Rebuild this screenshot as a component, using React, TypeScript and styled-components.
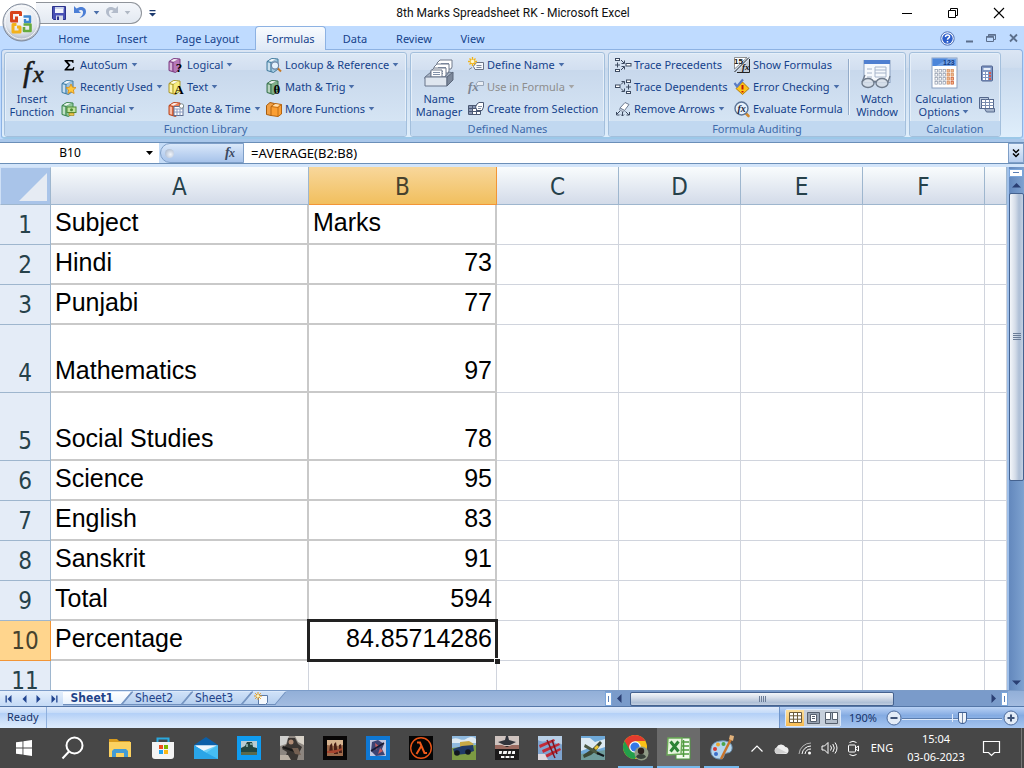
import React from "react";
import styled, { createGlobalStyle, css } from "styled-components";

const UI = `"Noto Sans", "Open Sans", sans-serif`;
const HEAD = `"DejaVu Sans Condensed", "DejaVu Sans", sans-serif`;
const CELL = `"Liberation Sans", Arial, sans-serif`;

const Global = createGlobalStyle`
  *, *::before, *::after { box-sizing: border-box; }
  body { margin: 0; overflow: hidden; }
  button, input { font: inherit; color: inherit; border: 0; padding: 0; margin: 0; background: none; }
  svg { display: block; flex: none; overflow: visible; }
`;

const Page = styled.div`
  display: flex;
  flex-direction: column;
  height: 100vh;
  font: 11px/14px ${UI};
  color: #15428b;
  background: #bfdbff;
`;

/* ---------- title bar ---------- */
const TitleBar = styled.header`
  position: relative;
  display: flex;
  align-items: center;
  height: 26px;
  flex: none;
  background: #fff;
  color: #111;
`;
const Title = styled.h1`
  flex: 1;
  margin: 0;
  padding-right: 20px;
  text-align: center;
  font: 12px/14px Roboto, ${UI};
`;
const QuickAccess = styled.div`
  display: flex;
  align-items: center;
  height: 22px;
  width: 106px;
  margin-left: 36px;
  padding-left: 15px;
  gap: 3px;
  border: 1px solid #8f949b;
  border-left: 0;
  border-radius: 0 11px 11px 0;
  background: linear-gradient(#f4f7fb, #e3e9f1);
`;
const IconButton = styled.button<{ $w?: number }>`
  display: flex;
  align-items: center;
  justify-content: center;
  width: ${(p) => p.$w ?? 16}px;
  height: 16px;
  flex: none;
`;
const WindowButtons = styled.div`
  display: flex;
  width: 140px;
`;
const OfficeButton = styled.button`
  position: absolute;
  z-index: 2;
  left: 2px;
  top: 3px;
  width: 39px;
  height: 39px;
`;

/* ---------- ribbon ---------- */
const TabBar = styled.nav`
  display: flex;
  height: 24px;
  flex: none;
  padding-left: 44px;
`;
const Tab = styled.button<{ $w: number; $on?: boolean }>`
  width: ${(p) => p.$w}px;
  height: 24px;
  && { padding-top: 2px; }
  ${(p) =>
    p.$on &&
    css`
      && {
        position: relative;
        border: 1px solid #8db2e3;
        border-bottom: 0;
        border-radius: 4px 4px 0 0;
        background: linear-gradient(#f8fbfe, #dfe9f6);
        padding-top: 0;
        z-index: 1;
      }
    `}
`;
const TabTools = styled.div`
  display: flex;
  align-items: center;
  gap: 6px;
  margin-left: auto;
  padding-right: 3px;
`;
const Ribbon = styled.section`
  display: flex;
  gap: 3px;
  height: 90px;
  flex: none;
  margin: -1px 1px 0;
  padding: 2px 2px 1px;
  border: 1px solid #8db2e3;
  border-bottom: 2px solid #9cc8e8;
  border-radius: 4px;
  background: linear-gradient(#dbe6f4, #cfddee 20%, #c8d9ed 21%, #dfeefb);
`;
const Group = styled.div<{ $w: number }>`
  display: flex;
  flex-direction: column;
  width: ${(p) => p.$w}px;
  height: 85px;
  border: 1px solid #a3bfdc;
  border-radius: 3px;
  box-shadow: inset 0 0 0 1px #e6eff9;
  overflow: hidden;
  background: linear-gradient(#dde8f5, #d2dff0 20%, #c8d8ec 21%, #d9e8f6);
`;
const GroupBody = styled.div<{ $pad?: number }>`
  display: flex;
  flex: 1;
  min-height: 0;
  padding: 1px 0 0 ${(p) => p.$pad ?? 4}px;
`;
const GroupLabel = styled.div`
  height: 15px;
  line-height: 15px;
  text-align: center;
  color: #3e6aaa;
  background: #c1d8f0;
`;
const BigButton = styled.button<{ $w?: number }>`
  && { margin-right: 5px; padding-top: 4px; }
  display: flex;
  flex-direction: column;
  align-items: center;
  width: ${(p) => p.$w ?? 48}px;
  line-height: 13px;
  white-space: nowrap;
  flex: none;
  svg.big { margin-bottom: 2px; }
`;
const BigLine = styled.span`
  display: flex;
  align-items: center;
  gap: 3px;
`;
const CommandColumn = styled.div<{ $w: number }>`
  display: flex;
  flex-direction: column;
  width: ${(p) => p.$w}px;
  flex: none;
`;
const Command = styled.button<{ $off?: boolean }>`
  && { color: ${(p) => (p.$off ? "#8d8d8d" : "inherit")}; }
  display: flex;
  align-items: center;
  gap: 3px;
  height: 22px;
  white-space: nowrap;
`;
const Divider = styled.div`
  width: 2px;
  height: 56px;
  flex: none;
  margin: 5px 3px 0;
  background: linear-gradient(90deg, #93abc9 50%, #eef4fb 50%);
`;
const SmallStack = styled.div`
  display: flex;
  flex-direction: column;
  gap: 14px;
  padding-top: 12px;
`;

/* ---------- formula bar ---------- */
const FormulaBar = styled.section`
  display: flex;
  height: 28px;
  flex: none;
  align-items: stretch;
  border-top: 3px solid #a9c7ea;
  border-bottom: 3px solid #d3e5fa;
  box-shadow: inset 0 1px 0 #6b8fb8, inset 0 -1px 0 #6b8fb8;
  background: #c5dcf7;
  color: #000;
`;
const NameBox = styled.label`
  display: flex;
  align-items: center;
  width: 159px;
  margin: 1px 0;
  background: #fff;
  input { width: 140px; margin-right: 6px; text-align: center; font-size: 12px; }
`;
const FxArea = styled.div`
  display: flex;
  align-items: center;
  justify-content: space-between;
  width: 84px;
  margin: 1px 0 1px 1px;
  padding: 0 5px 0 4px;
  border: 1px solid #7f9fc8;
  border-radius: 11px 0 0 11px;
  background: linear-gradient(#dbe9fa, #c0d5f2 50%, #a7c3ea);
`;
const Dimple = styled.span`
  width: 9px;
  height: 9px;
  border-radius: 50%;
  background: radial-gradient(circle at 60% 60%, #f2f5fa, #9bacc5);
`;
const FormulaInput = styled.input`
  flex: 1;
  min-width: 0;
  && { margin: 1px 0; padding-left: 7px; background: #fff; font-size: 13px; }
`;
const ExpandButton = styled.button`
  width: 16px;
  display: flex;
  align-items: center;
  justify-content: center;
  && { margin: 1px 0; border: 1px solid #7f9fc8; background: linear-gradient(#e6f0fc, #b6cdee); }
`;

/* ---------- sheet ---------- */
const SheetArea = styled.main`
  display: flex;
  flex: 1;
  min-height: 0;
`;
const GridClip = styled.div`
  flex: 1;
  min-width: 0;
  overflow: hidden;
  background: #fff;
`;
const Grid = styled.table`
  width: 100%;
  table-layout: fixed;
  border-collapse: separate;
  border-spacing: 0;
  color: #000;
`;
const ColHead = styled.th<{ $w?: number; $on?: boolean }>`
  ${(p) => p.$w && `width: ${p.$w}px;`}
  height: 38px;
  padding: 3px 0 0;
  font: 24px/32px ${HEAD};
  color: #26414a;
  border-right: 1px solid #9eb6ce;
  border-bottom: 1px solid #9eb6ce;
  background: linear-gradient(#f9fcfd, #d3dbe9);
  ${(p) =>
    p.$on &&
    css`
      color: #47422e;
      border-color: #f29536;
      background: linear-gradient(#f8d79b, #f1bf5e);
    `}
`;
const Corner = styled.th`
  width: 51px;
  height: 38px;
  padding: 4px 4px 3px 18px;
  border: 1px solid #cfe0f6;
  border-right-color: #9eb6ce;
  border-bottom-color: #9eb6ce;
  background: #a9c4e9;
`;
const RowHead = styled.th<{ $h: number; $on?: boolean }>`
  height: ${(p) => p.$h}px;
  padding: 0 0 4px;
  vertical-align: bottom;
  text-align: center;
  font: 24px/30px ${HEAD};
  color: #26414a;
  border-right: 1px solid #9eb6ce;
  border-bottom: 1px solid #9eb6ce;
  background: ${(p) => (p.$on ? "#ffd58d" : "#e4ecf7")};
  ${(p) => p.$on && "border-color: #f29536; color: #47422e;"}
`;
const Cell = styled.td<{ $boxed?: boolean; $num?: boolean }>`
  position: relative;
  padding: 0 3px 6px 4px;
  vertical-align: bottom;
  white-space: nowrap;
  font: 25px/29px ${CELL};
  text-align: ${(p) => (p.$num ? "right" : "left")};
  border-right: 1px solid #d0d4dd;
  border-bottom: 1px solid #d0d4dd;
  ${(p) => p.$boxed && "border-width: 0 2px 2px 0; border-color: #c9c9c9;"}
`;
const Selection = styled.span`
  position: absolute;
  z-index: 1;
  inset: -2px -3px -3px -2px;
  border: 3px solid #222;
  &::after {
    content: "";
    position: absolute;
    right: -5px;
    bottom: -5px;
    width: 6px;
    height: 6px;
    background: #222;
    border: 1px solid #fff;
    border-width: 1px 0 0 1px;
  }
`;
const VScroll = styled.div`
  display: flex;
  flex-direction: column;
  align-items: stretch;
  width: 17px;
  flex: none;
  border-left: 2px solid #9fc0ea;
  background: linear-gradient(90deg, #6388bd, #7ea2d0);
`;
const SplitV = styled.div`
  height: 8px;
  margin: 2px 1px 1px 0;
  padding: 2px 3px;
  border: 1px solid #7aa5da;
  background: #fff;
  &::after { content: ""; display: block; height: 1px; background: #5a7fb5; }
`;
const ArrowButton = styled.button`
  display: flex;
  align-items: center;
  justify-content: center;
  width: 15px;
  height: 15px;
  flex: none;
`;
const ThumbV = styled.div`
  display: flex;
  flex-direction: column;
  align-items: center;
  justify-content: center;
  gap: 1px;
  height: 55%;
  border: 1px solid #45628f;
  border-radius: 2px;
  background: linear-gradient(90deg, #f3f6fa, #d5dde9 40%, #aebfd6 70%, #c3d0e2);
  i { width: 8px; height: 1px; background: #6b7d98; }
`;
const Spring = styled.div`
  flex: 1;
`;

/* ---------- sheet tabs ---------- */
const SheetBar = styled.div`
  display: flex;
  align-items: center;
  height: 17px;
  flex: none;
  border-top: 1px solid #7c9cc8;
  border-bottom: 1px solid #5577a8;
  background: linear-gradient(#92afd8, #a3bce0);
`;
const SheetNav = styled.div`
  display: flex;
  align-items: center;
  width: 63px;
  height: 15px;
  padding-left: 1px;
  background: linear-gradient(#e4effc, #c4daf6);
`;
const SheetTab = styled.button<{ $w: number; $on?: boolean }>`
  position: relative;
  width: ${(p) => p.$w}px;
  height: 15px;
  z-index: ${(p) => (p.$on ? 1 : 0)};
  && {
    font: ${(p) => (p.$on ? "bold" : "normal")} 12px/15px ${HEAD};
    color: #1f4389;
    padding-right: 6px;
  }
  display: flex;
  align-items: center;
  justify-content: center;
  &::before {
    content: "";
    position: absolute;
    z-index: -1;
    inset: 0 0 1px ${(p) => (p.$on ? -6 : 0)}px;
    transform: skewX(-40deg);
    border: 1px solid #6f8fbd;
    border-top-color: #dbe9fb;
    background: ${(p) => (p.$on ? "linear-gradient(#fff, #e8f2fd)" : "linear-gradient(#cfe1f8, #b6cfef)")};
  }
`;
const SheetTabs = styled.div`
  display: flex;
  isolation: isolate;
  overflow: hidden;
  padding-right: 10px;
`;
const HScroll = styled.div`
  display: flex;
  align-items: center;
  width: 403px;
  margin-left: auto;
  margin-right: 16px;
  height: 15px;
  background: #7a9bca;
`;
const SplitH = styled.div`
  width: 7px;
  height: 14px;
  padding: 3px 2px;
  border: 1px solid #7aa5da;
  background: #fff;
  &::after { content: ""; display: block; width: 1px; height: 6px; background: #5a7fb5; }
`;
const ThumbH = styled.div`
  display: flex;
  align-items: center;
  justify-content: center;
  gap: 1px;
  width: 264px;
  height: 14px;
  margin-left: 3px;
  border: 1px solid #45628f;
  border-radius: 2px;
  background: linear-gradient(#f3f6fa, #d5dde9 40%, #aebfd6 80%, #c3d0e2);
  i { width: 1px; height: 6px; background: #6b7d98; }
`;

/* ---------- status bar ---------- */
const StatusBar = styled.footer`
  display: flex;
  height: 21px;
  flex: none;
  background: linear-gradient(#dfeafb, #c3daf8 30%, #b3d0f7 31%, #cfe1f9 70%, #dcebfc);
`;
const StatusText = styled.div`
  width: 47px;
  padding-left: 7px;
  line-height: 20px;
  color: #15336b;
  border-right: 1px solid #8fb0dd;
`;
const StatusRight = styled.div`
  display: flex;
  align-items: center;
  width: 245px;
  margin-left: auto;
  padding-left: 5px;
  border-left: 1px solid #6f95ca;
  background: linear-gradient(#b9d2f5, #8cb0e4 35%, #84abe2 40%, #a6c5f0);
`;
const ViewButtons = styled.div`
  display: flex;
  height: 18px;
  border: 1px solid #dbe8f9;
  border-radius: 2px;
`;
const ViewButton = styled.button<{ $on?: boolean }>`
  display: flex;
  align-items: center;
  justify-content: center;
  width: 18px;
  height: 16px;
  && { background: ${(p) => (p.$on ? "linear-gradient(#fcdf9c, #f8bc52)" : "#c6cfdb")}; }
`;
const ZoomLabel = styled.button`
  width: 44px;
  && { color: #15336b; }
`;
const ZoomSlider = styled.input`
  appearance: none;
  width: 100px;
  height: 16px;
  && {
    background: linear-gradient(#dfeafa, #dfeafa) 50px 50% / 1px 8px no-repeat,
      linear-gradient(#dfeafa, #dfeafa) 0 9px / 100% 1px no-repeat,
      linear-gradient(#5b7dae, #5b7dae) 0 8px / 100% 1px no-repeat;
  }
  &::-webkit-slider-thumb {
    appearance: none;
    width: 9px;
    height: 12px;
    border: 1px solid #3f5f92;
    background: linear-gradient(90deg, #eef3fa 44%, #6f86a8 45%, #6f86a8 56%, #eef3fa 57%);
    border-radius: 1px 1px 5px 5px;
  }
`;

/* ---------- taskbar ---------- */
const Taskbar = styled.nav`
  display: flex;
  height: 40px;
  flex: none;
  color: #fff;
  background: #474747;
`;
const Task = styled.button<{ $w?: number; $open?: boolean; $on?: boolean }>`
  display: flex;
  align-items: center;
  justify-content: center;
  width: ${(p) => p.$w ?? 43}px;
  height: 40px;
  && {
    ${(p) => p.$on && "background: #6b6b6b;"}
    ${(p) => (p.$open || p.$on) && "background-image: linear-gradient(#76b9ed, #76b9ed); background-size: calc(100% - 8px) 2px; background-position: 50% 100%; background-repeat: no-repeat;"}
    ${(p) => p.$on && "background-size: 100% 2px;"}
  }
`;
const Tray = styled.div`
  display: flex;
  align-items: center;
  margin-left: auto;
`;
const TrayItem = styled.button<{ $w: number }>`
  display: flex;
  flex-direction: column;
  align-items: center;
  justify-content: center;
  width: ${(p) => p.$w}px;
  height: 40px;
  line-height: 18px;
`;
const ShowDesktop = styled.button`
  width: 13px;
  height: 40px;
  && { border-right: 1px solid #777; margin-right: 2px; }
`;

/* ---------- icons ---------- */
const Caret = ({ c = "#4a6ea9" }: { c?: string }) => (
  <svg width="7" height="4" viewBox="0 0 7 4"><path d="M.7 0h5.600L3.500 3.400z" fill={c} /></svg>
);

const Book = ({ c, d, children }: { c: string; d: string; children?: React.ReactNode }) => (
  <svg width="16" height="16" viewBox="0 0 16 16">
    <path d="M1 4.500 5.500 1.500 12 2v10l-4.500 3.500L1 13.500z" fill={c} stroke={d} />
    <path d="M1 4.500 5 5.500v9.500M5 5.500 9.500 2" fill="none" stroke={d} />
    <path d="M1.800 5.500l2.200.6v7.500l-2.200-.7z" fill="#fff" opacity=".45" />
    <path d="M2.500 4 6 2l4 .300L6 4.700z" fill="#fff" opacity=".85" />
    {children}
  </svg>
);
const bookText = (t: string) => (
  <text x="11" y="14.500" textAnchor="middle" fontFamily="Liberation Serif, serif" fontWeight="700" fontSize="13" fill="#000">{t}</text>
);

const Sigma = () => (
  <svg width="16" height="16" viewBox="0 0 16 16"><path d="M3.500 3h9v3h-1c-.2-1.200-.8-1.600-2-1.600H6.500L9.600 8l-3.400 3.800h4c1.200 0 1.900-.5 2.200-1.800h1L12.700 13.500h-9.200v-.9L7.300 8.300 3.500 3.900z" fill="#000" /></svg>
);
const Recent = () => (
  <Book c="#9cc3e0" d="#3f7da5"><path d="m10 5 1.500 3.200 3.500.4-2.600 2.400.7 3.500-3.100-1.700-3.100 1.700.7-3.500L5 8.600l3.500-.4z" fill="#ffc83d" stroke="#d98b11" strokeWidth=".8" /></Book>
);
const Financial = () => (
  <Book c="#8fc79a" d="#3b8350"><rect x="6" y="6" width="9" height="5.500" fill="#bfe3a0" stroke="#4c8a35" /><circle cx="10.500" cy="8.700" r="1.500" fill="#4c8a35" /><path d="M8 12h5v2.500H8z" fill="#e9c84f" stroke="#9a7a16" strokeWidth=".6" /></Book>
);
const DateTime = () => (
  <Book c="#f0825a" d="#b9461f"><rect x="6" y="5.500" width="9" height="9" fill="#fff" stroke="#5f6f92" /><path d="M6 8h9M9 8v6.500M12 8v6.500M6 11h9" stroke="#8a9bc0" /><circle cx="13.500" cy="5" r="2.200" fill="#fff" stroke="#566" strokeWidth=".7" /></Book>
);
const Lookup = () => (
  <Book c="#9fc7e0" d="#427a9c"><path d="m11.500 11 3.500 3.500" stroke="#c77a28" strokeWidth="2" /><circle cx="9" cy="8.500" r="3.600" fill="#e4f2fd" stroke="#6f87a6" strokeWidth="1.200" /></Book>
);
const More = () => (
  <svg width="16" height="16" viewBox="0 0 16 16"><path d="M.5 4.500 4 1.500l4.500 1v9L5 14.500l-4.500-1z" fill="#f2a044" stroke="#a85c0c" /><path d="M5 5.500 9 2.500l6.500 1v9.500L12 15.500l-7-1z" fill="#fb9f33" stroke="#b5640f" /><path d="M5 5.500 12 6.500v9M12 6.500l3.500-3" fill="none" stroke="#b5640f" strokeWidth=".8" /><path d="M6.500 5 9.500 3l4 .7L11.500 5.700z" fill="#ffe0b0" /></svg>
);
const FxBig = () => (
  <svg className="big" width="32" height="32" viewBox="0 0 32 32" fontFamily="Liberation Serif, serif" fontStyle="italic" fill="#1a1a1a" stroke="#1a1a1a" strokeWidth=".6">
    <text x="7" y="24" fontSize="30">f</text>
    <text x="17" y="24" fontSize="24">x</text>
  </svg>
);
const FxSmall = () => (
  <svg width="16" height="16" viewBox="0 0 16 16" fontFamily="Liberation Serif, serif" fontStyle="italic" fontWeight="700" fill="#3b4860">
    <text x="3" y="12" fontSize="14">f</text>
    <text x="7" y="12" fontSize="12">x</text>
  </svg>
);
const NameManagerIcon = () => (
  <svg className="big" width="32" height="32" viewBox="0 0 32 32">
    {[[14, 2], [11, 6], [8, 10]].map(([x, y]) => (
      <g key={x}><path d={`M${x} ${y + 3}l3-3h12v7l-1 2H${x}z`} fill="#fff" stroke="#707b8c" /><path d={`M${x + 4} ${y + 3.5}h8M${x + 4} ${y + 5.5}h8`} stroke="#8190a8" /></g>
    ))}
    <path d="M2 19l6-5v5h14l4-5 4 1-5 6H2z" fill="#a9b4c4" stroke="#68758a" />
    <path d="M8 12h11v7H8z" fill="#fff" stroke="#707b8c" /><path d="M10 14.500h7M10 16.500h7" stroke="#8190a8" />
    <path d="M2 19h22v9H2z" fill="#dfe6ef" stroke="#68758a" />
    <path d="m24 19 6-5v8l-6 6z" fill="#7c889b" stroke="#5b677a" />
  </svg>
);
const DefineName = () => (
  <svg width="16" height="16" viewBox="0 0 16 16"><path d="M7 6.500 9 5.500h6.500v7H7L5.500 9.500z" fill="#f6f8fb" stroke="#6a7486" /><path d="M8.500 8.500h5M8.500 10.500h5M1 12.500l3-2" stroke="#7a879c" /><path d="M4.500 0v9M0 4.500h9M1.500 1.500l6 6M7.500 1.500l-6 6" stroke="#f2b418" strokeWidth="1.300" /><circle cx="4.500" cy="4.500" r="1.800" fill="#fffbd0" /></svg>
);
const UseFormula = () => (
  <svg width="16" height="16" viewBox="0 0 16 16"><text x="0" y="12" fontFamily="Liberation Serif, serif" fontStyle="italic" fontWeight="700" fontSize="13" fill="#7d8694">fx</text><path d="M9 3.500 10.500 2.500h5v4H9l-1-1.500z" fill="#e8edf4" stroke="#97a5b8" /></svg>
);
const CreateSel = () => (
  <svg width="16" height="16" viewBox="0 0 16 16"><path d="M.5 4.500h12v9H.5z" fill="#fff" stroke="#4a5873" /><path d="M1 5h4v8H1zM1 5h11v3H1z" fill="#8a98b5" /><path d="M.5 7.500h12M.5 10.500h12M4.500 4.500v9M8.500 4.500v9" stroke="#4a5873" /><path d="M9 3 11 1.500h4.500V6L14 9.500H9L7.500 6z" fill="#fff" stroke="#4a5873" /><path d="M10 5.500h4M10 7.500h3" stroke="#8190a8" /></svg>
);
const TracePre = () => (
  <svg width="16" height="16" viewBox="0 0 16 16" fill="none" stroke="#3d4a60"><rect x=".5" y="1.500" width="4" height="2" fill="#fff" /><rect x=".5" y="12.500" width="4" height="2" fill="#fff" /><path d="M2.500 5.500v5M0 8h5M6 3l3 3M6 13 9 10M9.500 3.500v3h-3M9.500 12.500v-3h-3" /><rect x="11" y="6.500" width="5" height="2.500" fill="#fff" /></svg>
);
const TraceDep = () => (
  <svg width="16" height="16" viewBox="0 0 16 16" fill="none" stroke="#3d4a60"><rect x=".5" y="6" width="4.500" height="2.500" fill="#fff" /><path d="M6 5.500 9 2.500M6 9.500 9 12.500M6.500 2.500h3v3M6.500 12.500h3v-3M13.500 5.500v5M11 8h5" /><rect x="11.500" y="1" width="4" height="2.500" fill="#fff" /><rect x="11.500" y="12.500" width="4" height="2" fill="#fff" /></svg>
);
const RemoveArrows = () => (
  <svg width="16" height="16" viewBox="0 0 16 16"><path d="m5 7 5-5.500 4 2L9.500 9.500z" fill="#fff" stroke="#6d7a90" /><path d="m5 7 4.500 2.500-1 1.500L4.500 9z" fill="#c5cfdd" stroke="#6d7a90" strokeWidth=".7" /><path d="M5 10 1.500 13.500M1.500 11v3h3M7.500 11v4M6 13.500l1.500 1.500L9 13.500M10.500 10.500l3.500 3.500M14.500 11v3h-3" fill="none" stroke="#3d4a60" /></svg>
);
const ShowFormulas = () => (
  <svg width="16" height="16" viewBox="0 0 16 16">
    <path d="M.5.500H13L.5 12z" fill="#fff" stroke="#777" strokeWidth=".8" />
    <path d="M15 3v12H3z" fill="#c3ccd8" />
    <path d="M15.500 2v13.500H3" stroke="#222" fill="none" />
    <path d="M15 .5.5 15" stroke="#222" />
    <text x="0" y="7" fontFamily="Liberation Sans, sans-serif" fontSize="8" fontWeight="700" fill="#111">15</text>
    <text x="8" y="13" fontFamily="Liberation Serif, serif" fontSize="9" fontStyle="italic" fontWeight="700" fill="#111">fx</text>
  </svg>
);
const ErrorCheck = () => (
  <svg width="16" height="16" viewBox="0 0 16 16"><path d="m8.500 3 6.500 6.500-6.500 6-6.500-6z" fill="#fcc419" stroke="#b97a08" /><path d="M8.500 6v4.500M8.500 12v1.500" stroke="#c21807" strokeWidth="2" /><path d="m.5 4 2.500 3.500L9 .5" fill="none" stroke="#5b7cc4" strokeWidth="2.200" /></svg>
);
const EvalFormula = () => (
  <svg width="16" height="16" viewBox="0 0 16 16"><path d="m11.500 12 3 3" stroke="#d08a32" strokeWidth="2.600" strokeLinecap="round" /><circle cx="7.500" cy="7.500" r="6.500" fill="#e6f1fb" stroke="#5b7396" strokeWidth="1.400" /><text x="3.500" y="11" fontFamily="Liberation Serif, serif" fontStyle="italic" fontWeight="700" fontSize="10" fill="#1a2440">fx</text></svg>
);
const WatchIcon = () => (
  <svg className="big" width="32" height="32" viewBox="0 0 32 32"><rect x="3" y="2.500" width="26" height="22" fill="#f6f9fd" stroke="#8aa0c0" /><path d="M3 2h26v4H3z" fill="#4f7fd0" /><path d="M6 11h5M6 15h5M6 19h5M14 9h11v10H14zM14 12h11M14 15h11" stroke="#a6b4ca" fill="none" /><ellipse cx="7" cy="25" rx="6" ry="4.500" fill="#d6dee8" fillOpacity=".85" stroke="#707c8c" strokeWidth="1.400" /><ellipse cx="21" cy="25" rx="6" ry="4.500" fill="#d6dee8" fillOpacity=".85" stroke="#707c8c" strokeWidth="1.400" /><path d="M13 24c.5-1 1.500-1 2 0M27 24l2-6M1 24l3-7" fill="none" stroke="#707c8c" strokeWidth="1.300" /></svg>
);
const CalcIcon = () => (
  <svg className="big" width="32" height="32" viewBox="0 0 32 32"><rect x="4" y="0" width="25" height="30" fill="#fff" stroke="#8a9fbf" /><path d="M4.500.500h24V8h-24z" fill="#6ea0e6" /><path d="M4.500.500H20L8 8H4.500z" fill="#4c86da" /><text x="15" y="7" fontFamily="Liberation Sans, sans-serif" fontSize="7" fontWeight="700" fill="#123a80">123</text>
    {[0, 1, 2, 3].map((r) => [0, 1, 2, 3, 4].map((c) => <rect key={`${r}${c}`} x={7 + c * 4} y={11.5 + r * 4} width="2.600" height="2.600" fill={c > 2 ? "#f5b98c" : "#fff"} stroke={c === 4 && r > 1 ? "#c9552d" : c > 2 ? "#d08a5a" : "#8995a8"} strokeWidth=".7" />))}
  </svg>
);
const CalcNow = () => (
  <svg width="16" height="18" viewBox="0 0 16 18"><rect x="2.500" y="1" width="11" height="15" rx="1" fill="#7f96c2" stroke="#4f6390" /><path d="M4.500 3h7v2h-7z" fill="#e5edf9" />{[0, 1, 2].map((r) => [0, 1, 2].map((c) => <rect key={`${r}${c}`} x={4 + c * 3} y={7 + r * 3} width="2" height="2" fill={c === 2 ? "#d6574c" : "#fff"} />))}</svg>
);
const CalcSheet = () => (
  <svg width="18" height="17" viewBox="0 0 18 17"><path d="M1.500 1.500h9v11h-9z" fill="#b9c8de" stroke="#55688c" /><rect x="3.500" y="3.500" width="12" height="9" fill="#fff" stroke="#55688c" /><path d="M3.500 6.500h12M3.500 9.500h12M7.500 3.500v9M11.500 3.500v9" stroke="#7a8dae" /><path d="M6.500 12.500h10V16h-8z" fill="#a5b5cd" stroke="#55688c" /></svg>
);

const OfficeLogo = () => (
  <svg width="39" height="39" viewBox="0 0 39 39">
    <defs><radialGradient id="orb" cx=".5" cy=".3" r=".8"><stop offset="0" stopColor="#fff" /><stop offset=".6" stopColor="#dfe4ec" /><stop offset="1" stopColor="#8a95a6" /></radialGradient></defs>
    <circle cx="19.500" cy="19.500" r="18.500" fill="url(#orb)" stroke="#7d8797" />
    <circle cx="19.500" cy="19.500" r="16.500" fill="none" stroke="#fff" opacity=".8" />
    <g fill="none" strokeLinejoin="round">
      <path d="M18.500 13v-3.500h-9v8.500h5M14.500 13.500v6" stroke="#d8441c" strokeWidth="3" />
      <path d="M21.500 13.500h6.500v5.500h-5v-3" stroke="#3d86cf" strokeWidth="2.400" />
      <path d="M14.500 21.500h-3.500v7.500h7v-5h-3" stroke="#f3b21b" strokeWidth="3" />
      <path d="M21.500 21.500h7v6.500h-6.500v-4" stroke="#67ab3c" strokeWidth="2.600" />
    </g>
  </svg>
);
const Save = () => (
  <svg width="16" height="16" viewBox="0 0 16 16"><path d="M1.500 1.500h13v13h-12l-1-1z" fill="#4951b5" stroke="#2c338c" /><path d="M4 2h8.500v6H4z" fill="#f3f5fb" /><path d="M4 2h8.500v2H4z" fill="#c9d2ec" /><path d="M5 10.500h7V15H5z" fill="#d6dbe8" /><path d="M6 11.500h2V15H6z" fill="#2c338c" /></svg>
);
const Undo = ({ c, flip }: { c: string; flip?: boolean }) => (
  <svg width="16" height="16" viewBox="0 0 16 16"><g transform={flip ? "matrix(-1 0 0 1 16 0)" : undefined}><path d="M2 1v7h7L6.500 5.800C9 4 11.500 5 11 8c-.3 2-1.500 3.500-3.500 5C12 12 14 9.500 14 6.500 14 2 8.500.5 4.500 3.600z" fill={c} /></g></svg>
);
const Tri = ({ dir, c = "#2a3f73" }: { dir: "u" | "d" | "l" | "r"; c?: string }) => (
  <svg width="9" height="9" viewBox="0 0 9 9"><path d={{ u: "M0 6.500 4.500 2 9 6.500z", d: "M0 2.500 4.500 7 9 2.500z", l: "M6.500 0 2 4.500 6.500 9z", r: "M2.500 0 7 4.500 2.500 9z" }[dir]} fill={c} /></svg>
);
const NavArrow = ({ left, bar }: { left?: boolean; bar?: boolean }) => (
  <svg width="8" height="8" viewBox="0 0 8 8"><g fill="#20448f" transform={left ? undefined : "matrix(-1 0 0 1 8 0)"}><path d="M6.500 0v8L2.500 4z" />{bar && <path d="M.5.500h1.300v7H.5z" />}</g></svg>
);

const Frame = ({ bg, children }: { bg: string; children: React.ReactNode }) => (
  <svg width="24" height="24" viewBox="0 0 24 24"><rect width="24" height="24" fill={bg} />{children}</svg>
);
const appIcons: Record<string, React.ReactNode> = {
  Start: <svg width="18" height="18" viewBox="0 0 18 18"><path d="M1 3.300 7.500 2.400v6.200H1zM8.400 2.300 17 1v7.600H8.400zM1 9.400h6.500v6.200L1 14.700zM8.400 9.400H17V17l-8.600-1.300z" fill="#fff" /></svg>,
  Search: <svg width="24" height="24" viewBox="0 0 24 24" fill="none" stroke="#fff" strokeWidth="2"><circle cx="13.500" cy="9.500" r="8" /><path d="m8 15.500-6.500 7" /></svg>,
  "File Explorer": <svg width="24" height="24" viewBox="0 0 24 24"><path d="M1 3h8l2 2h11v4H1z" fill="#d89b1d" /><path d="M1 6h22v15H1z" fill="#fbd160" /><path d="M4 21v-6l2-2h12l2 2v6h-4v-4H8v4z" fill="#439bd4" /></svg>,
  Store: <svg width="24" height="24" viewBox="0 0 24 24"><path d="M6.500 7V2.500h11V7" fill="none" stroke="#2aa9df" strokeWidth="2" /><path d="M1 6h22v14a3 3 0 0 1-3 3H4a3 3 0 0 1-3-3z" fill="#f4f4f4" /><path d="M8 9h4v4H8z" fill="#ef4f21" /><path d="M13 9h4v4h-4z" fill="#7eb900" /><path d="M8 14h4v4H8z" fill="#20a3ee" /><path d="M13 14h4v4h-4z" fill="#fdb813" /></svg>,
  Mail: <svg width="24" height="24" viewBox="0 0 24 24"><path d="M0 9 12 1l12 8v5H0z" fill="#0b5fa8" /><path d="M1 9.500h22L14 17H10z" fill="#eef7fd" /><path d="M0 9l12 7L24 9v14H0z" fill="#2aa5e8" /><path d="M1 9.500h22L12.500 16.500z" fill="#eef7fd" /><path d="M24 9v14L9 15z" fill="#4dc4f5" opacity=".8" /></svg>,
  "Train game": <Frame bg="#109cf0"><path d="M4 5h16v14H4z" fill="#b9cdd3" /><path d="M4 12l4-2 2-4h5l1 5 4 1v7H4z" fill="#24463f" /><path d="M4 16h16v3H4z" fill="#5a6a4b" /><path d="M9 8h2v3H9zM13 7h3v2h-3z" fill="#7da09a" /></Frame>,
  "Soldier game": <Frame bg="#8d8680"><path d="M0 0h9L6 8 0 10z" fill="#cfcfcd" /><path d="M15 0h9v9l-6-3z" fill="#d8d2c8" /><path d="M8 2h7l3 6 4 3-3 6-2 7H5l2-8-5-3 5-5z" fill="#3b3633" /><circle cx="11" cy="6" r="2.500" fill="#b08b74" /><path d="m3 10 15 5-1 2L2 12z" fill="#1a1919" /><path d="M12 12h6l3 7-6-1z" fill="#756052" /><path d="M0 19h8l3 5H0z" fill="#b9aea2" /></Frame>,
  "Age game": <Frame bg="#080606"><path d="M4 4h16v16H4z" fill="#9c6a4b" /><path d="M4 4h16v5l-7 1-9-1z" fill="#d7b390" /><path d="m7 9 2-2 1 10H6zM11 8l2-2 2 12h-4zM16 9l2-1 1 9h-3z" fill="#4a1f17" /><path d="M4 15l9-1 6-2v2l-7 3H4z" fill="#a8452f" /></Frame>,
  "Action game": <Frame bg="#0f78d4"><path d="M4 4h16v16H4z" fill="#c2c6de" /><path d="M6 6l6-2 6 4-2 5 3 6-9 1-5-5z" fill="#3d4372" /><path d="M9 7l4 3-3 4zM14 12l3 3-5 3z" fill="#c65b5f" /><path d="m5 15 13-8" stroke="#161a33" strokeWidth="1.500" /></Frame>,
  "Half-Life": <Frame bg="#050505"><circle cx="12" cy="12" r="10.300" fill="none" stroke="#e65317" strokeWidth="1.400" /><path d="M8 6.500h3l4.500 10.500h2.500M12 10.500 7.500 18" fill="none" stroke="#f05a1a" strokeWidth="2" /></Frame>,
  "Buggy game": <Frame bg="#8fb9de"><path d="M0 12l24-3v15H0z" fill="#7c9a43" /><path d="M0 3c6-3 9 3 14 0s8-2 10 0v4H0z" fill="#dfeaf2" /><path d="M8 6l9-1 5 3-4 3-10 1z" fill="#c7a945" /><path d="M1 13l9-3 11-1 1 6-9 3-10 1z" fill="#203a66" /><circle cx="5" cy="17" r="2.800" fill="#12161d" /><circle cx="16" cy="16" r="2.800" fill="#12161d" /></Frame>,
  "Air Force game": <Frame bg="#1c1a1b"><path d="M0 0h24v10H0z" fill="#cfc3bf" /><path d="M3 6 10 4l1-4h2l1 4 7 2-6 3H9z" fill="#30333b" /><path d="M0 9h7l5 2 5-2h7v4H0z" fill="#9a6a60" /><path d="M4 15h16v3H4zM6 20h13v2H6z" fill="#f4f4f4" /><path d="m8 14-1 5M13 14l-1 5M17 14l-1 5M10 19v4M15 19v4" stroke="#1c1a1b" strokeWidth="1.200" /></Frame>,
  "Triplane game": <Frame bg="#7fa4cf"><path d="M0 4c6 4 10-2 16 2s6 0 8 3V0H0z" fill="#b8cfe6" /><path d="M1 9 16 3l1 2L2 12zM4 14 21 7l1 2L5 17zM7 19l15-7 1 2L8 22z" fill="#c32a36" /><path d="m9 4 8 18M14 4l5 14" stroke="#7e1420" strokeWidth="1.500" /><path d="M0 18h7l3 6H0z" fill="#ded8de" /></Frame>,
  "Fighter game": <Frame bg="#6fa9d8"><path d="M0 2h9l5 4 10-3v8l-9 3-7-2-8 3z" fill="#dce9f2" /><path d="M0 18l24-4v10H0z" fill="#6f9c9c" /><path d="m2 19 9-6 8-8 2 2-6 8-5 4-7 3z" fill="#3b4735" /><path d="m4 8 15 9-2 2L3 11z" fill="#4b5843" /><path d="m13 12 3-3 2 2-3 3z" fill="#e9c437" /><path d="M16 17l7 3" stroke="#10161a" strokeWidth="2" /></Frame>,
};
const Chrome = () => (
  <svg width="26" height="26" viewBox="0 0 26 26"><circle cx="12" cy="12" r="12" fill="#fbc116" /><path d="M12 12 1.600 6A12 12 0 0 0 12 24l5-9z" fill="#239f4b" /><path d="M12 6h10.400A12 12 0 0 0 1.600 6l5.200 9z" fill="#e33b2e" /><circle cx="12" cy="12" r="5.800" fill="#fff" /><circle cx="12" cy="12" r="4.600" fill="#3478e6" /><circle cx="18.500" cy="18.500" r="7" fill="#8f9b86" /><circle cx="18" cy="16" r="3.200" fill="#2b211e" /><path d="M13 22c1-4 9-4 10 0a7 7 0 0 1-10 0z" fill="#37413a" /></svg>
);
const Excel = () => (
  <svg width="26" height="26" viewBox="0 0 26 26"><rect x="10" y="3" width="14" height="21" fill="#f4faf0" stroke="#4f9b3e" /><path d="M12 7h11M12 11h11M12 15h11M12 19h11M17.500 5v17" stroke="#4f9b3e" strokeWidth="1.500" /><path d="M2 3h14l-1 16-14 1z" fill="#e6f4dc" stroke="#6aa857" strokeWidth="1.400" /><path d="m4.500 6.500 8 10M12.500 6.500l-8 10" stroke="#2d8435" strokeWidth="3" /></svg>
);
const Paint = () => (
  <svg width="26" height="26" viewBox="0 0 26 26"><path d="M12 6c7-1 12 3 11 8s-5 3-7 5 0 5-5 5C5 24 1 20 2 14s5-7.500 10-8z" fill="#b5d6ee" stroke="#6b93b5" /><circle cx="6" cy="14" r="2" fill="#d63b35" /><circle cx="9" cy="9.500" r="2" fill="#eba72f" /><circle cx="14.500" cy="9" r="2" fill="#4ba54a" /><circle cx="7" cy="19" r="2" fill="#3b6fc9" /><path d="M22 4 14 20l-2 4" stroke="#c8742c" strokeWidth="2.500" fill="none" /><path d="m20 4 1-4 4 1-1 5z" fill="#e2b27b" /></svg>
);

/* ---------- data ---------- */
const columns: [string, number?][] = [["A", 258], ["B", 188], ["C", 122], ["D", 122], ["E", 122], ["F", 122], [""]];
const rows: [string, string, number][] = [
  ["Subject", "Marks", 40],
  ["Hindi", "73", 40],
  ["Punjabi", "77", 40],
  ["Mathematics", "97", 68],
  ["Social Studies", "78", 68],
  ["Science", "95", 40],
  ["English", "83", 40],
  ["Sanskrit", "91", 40],
  ["Total", "594", 40],
  ["Percentage", "84.85714286", 40],
  ["", "", 40],
];

type Cmd = { label: string; icon: React.ReactNode; menu?: boolean; off?: boolean };
const Commands = ({ w, items }: { w: number; items: Cmd[] }) => (
  <CommandColumn $w={w}>
    {items.map((i) => (
      <Command key={i.label} $off={i.off} disabled={i.off}>
        {i.icon}
        <span>{i.label}</span>
        {i.menu && <Caret c={i.off ? "#a5a5a5" : undefined} />}
      </Command>
    ))}
  </CommandColumn>
);

export default function App() {
  return (
    <Page>
      <Global />
      <TitleBar>
        <OfficeButton aria-label="Office menu"><OfficeLogo /></OfficeButton>
        <QuickAccess>
          <IconButton aria-label="Save"><Save /></IconButton>
          <IconButton $w={20} aria-label="Undo"><Undo c="#4c7fd6" /></IconButton>
          <Caret />
          <IconButton $w={18} aria-label="Redo"><Undo c="#b3bccb" flip /></IconButton>
          <Caret c="#b0b8c4" />
        </QuickAccess>
        <IconButton $w={20} aria-label="Customize toolbar">
          <svg width="7" height="7" viewBox="0 0 7 7"><path d="M.5 0h6v1.300h-6zM0 3h7L3.500 6.500z" fill="#1d3a6e" /></svg>
        </IconButton>
        <Title>8th Marks Spreadsheet RK - Microsoft Excel</Title>
        <WindowButtons>
          <IconButton $w={46} aria-label="Minimize"><svg width="10" height="10" viewBox="0 0 10 10"><path d="M0 5.500h10" stroke="#000" /></svg></IconButton>
          <IconButton $w={46} aria-label="Restore"><svg width="10" height="10" viewBox="0 0 10 10" fill="none" stroke="#000"><path d="M.5 2.500h7v7h-7zM2.500 2.500v-2h7v7h-2" /></svg></IconButton>
          <IconButton $w={46} aria-label="Close"><svg width="10" height="10" viewBox="0 0 10 10"><path d="m0 0 10 10M10 0 0 10" stroke="#000" strokeWidth="1.100" /></svg></IconButton>
        </WindowButtons>
      </TitleBar>

      <TabBar>
        <Tab $w={60}>Home</Tab>
        <Tab $w={56}>Insert</Tab>
        <Tab $w={95}>Page Layout</Tab>
        <Tab $w={71} $on>Formulas</Tab>
        <Tab $w={58}>Data</Tab>
        <Tab $w={60}>Review</Tab>
        <Tab $w={57}>View</Tab>
        <TabTools>
          <IconButton aria-label="Help"><svg width="15" height="15" viewBox="0 0 15 15"><circle cx="7.500" cy="7.500" r="6.700" fill="#fff" stroke="#4b6fb5" /><circle cx="7.500" cy="7.500" r="5.200" fill="#2d5fcb" /><path d="M5.500 6c0-3 4.500-2.500 4 0-.3 1.200-2 1.300-2 2.800M7.500 10v1.400" fill="none" stroke="#fff" strokeWidth="1.500" /></svg></IconButton>
          <IconButton aria-label="Minimize workbook"><svg width="9" height="9" viewBox="0 0 9 9"><path d="M1 7.500h7" stroke="#5c6f8c" strokeWidth="2" /></svg></IconButton>
          <IconButton aria-label="Restore workbook"><svg width="10" height="8" viewBox="0 0 10 8" fill="none" stroke="#5c6f8c"><path d="M.5 2.500h7v5h-7zM2.500 2V.5h7v5H8" /><path d="M.5 3h7M2.500 1h7" strokeWidth="1.500" /></svg></IconButton>
          <IconButton aria-label="Close workbook"><svg width="9" height="8" viewBox="0 0 9 8"><path d="m1 .5 7 7M8 .5l-7 7" stroke="#5c6f8c" strokeWidth="1.800" /></svg></IconButton>
        </TabTools>
      </TabBar>

      <Ribbon>
        <Group $w={403}>
          <GroupBody $pad={3}>
            <BigButton><FxBig /><BigLine>Insert</BigLine><BigLine>Function</BigLine></BigButton>
            <Commands w={107} items={[
              { label: "AutoSum", icon: <Sigma />, menu: true },
              { label: "Recently Used", icon: <Recent />, menu: true },
              { label: "Financial", icon: <Financial />, menu: true },
            ]} />
            <Commands w={98} items={[
              { label: "Logical", icon: <Book c="#b678b8" d="#7d3f83">{bookText("?")}</Book>, menu: true },
              { label: "Text", icon: <Book c="#f6ec7c" d="#a8952a">{bookText("A")}</Book>, menu: true },
              { label: "Date & Time", icon: <DateTime />, menu: true },
            ]} />
            <Commands w={130} items={[
              { label: "Lookup & Reference", icon: <Lookup />, menu: true },
              { label: "Math & Trig", icon: <Book c="#7fb08a" d="#3b7350">{bookText("θ")}</Book>, menu: true },
              { label: "More Functions", icon: <More />, menu: true },
            ]} />
          </GroupBody>
          <GroupLabel>Function Library</GroupLabel>
        </Group>
        <Group $w={195}>
          <GroupBody>
            <BigButton><NameManagerIcon /><BigLine>Name</BigLine><BigLine>Manager</BigLine></BigButton>
            <Commands w={136} items={[
              { label: "Define Name", icon: <DefineName />, menu: true },
              { label: "Use in Formula", icon: <UseFormula />, menu: true, off: true },
              { label: "Create from Selection", icon: <CreateSel /> },
            ]} />
          </GroupBody>
          <GroupLabel>Defined Names</GroupLabel>
        </Group>
        <Group $w={298}>
          <GroupBody $pad={6}>
            <Commands w={119} items={[
              { label: "Trace Precedents", icon: <TracePre /> },
              { label: "Trace Dependents", icon: <TraceDep /> },
              { label: "Remove Arrows", icon: <RemoveArrows />, menu: true },
            ]} />
            <Commands w={111} items={[
              { label: "Show Formulas", icon: <ShowFormulas /> },
              { label: "Error Checking", icon: <ErrorCheck />, menu: true },
              { label: "Evaluate Formula", icon: <EvalFormula /> },
            ]} />
            <Divider />
            <BigButton><WatchIcon /><BigLine>Watch</BigLine><BigLine>Window</BigLine></BigButton>
          </GroupBody>
          <GroupLabel>Formula Auditing</GroupLabel>
        </Group>
        <Group $w={92}>
          <GroupBody>
            <BigButton $w={60}><CalcIcon /><BigLine>Calculation</BigLine><BigLine>Options<Caret /></BigLine></BigButton>
            <SmallStack>
              <IconButton aria-label="Calculate now"><CalcNow /></IconButton>
              <IconButton aria-label="Calculate sheet"><CalcSheet /></IconButton>
            </SmallStack>
          </GroupBody>
          <GroupLabel>Calculation</GroupLabel>
        </Group>
      </Ribbon>

      <FormulaBar>
        <NameBox>
          <input aria-label="Name box" defaultValue="B10" />
          <svg width="7" height="4" viewBox="0 0 7 4"><path d="M0 0h7L3.500 4z" fill="#000" /></svg>
        </NameBox>
        <FxArea>
          <Dimple />
          <IconButton aria-label="Insert function"><FxSmall /></IconButton>
        </FxArea>
        <FormulaInput aria-label="Formula" defaultValue="=AVERAGE(B2:B8)" />
        <ExpandButton aria-label="Expand formula bar"><svg width="8" height="9" viewBox="0 0 8 9"><path d="m1 .5 3 3 3-3M1 4.500l3 3 3-3" fill="none" stroke="#000" strokeWidth="1.500" /></svg></ExpandButton>
      </FormulaBar>

      <SheetArea>
        <GridClip>
          <Grid>
            <thead>
              <tr>
                <Corner aria-label="Select all"><svg width="28" height="28" viewBox="0 0 28 28"><path d="M28 0v28H0z" fill="#e6ebf3" /></svg></Corner>
                {columns.map(([c, w]) => <ColHead key={c} $w={w} $on={c === "B"}>{c}</ColHead>)}
              </tr>
            </thead>
            <tbody>
              {rows.map(([a, b, h], i) => (
                <tr key={i}>
                  <RowHead $h={h} $on={i === 9}>{i + 1}</RowHead>
                  <Cell $boxed={i < 10}>{a}</Cell>
                  <Cell $boxed={i < 10} $num={i > 0}>{b}{i === 9 && <Selection />}</Cell>
                  <Cell /><Cell /><Cell /><Cell /><Cell />
                </tr>
              ))}
            </tbody>
          </Grid>
        </GridClip>
        <VScroll>
          <SplitV />
          <ArrowButton aria-label="Scroll up"><Tri dir="u" /></ArrowButton>
          <ThumbV><i /><i /><i /><i /></ThumbV>
          <Spring />
          <ArrowButton aria-label="Scroll down"><Tri dir="d" /></ArrowButton>
        </VScroll>
      </SheetArea>

      <SheetBar>
        <SheetNav>
          <IconButton $w={15} aria-label="First sheet"><NavArrow left bar /></IconButton>
          <IconButton $w={15} aria-label="Previous sheet"><NavArrow left /></IconButton>
          <IconButton $w={15} aria-label="Next sheet"><NavArrow /></IconButton>
          <IconButton $w={15} aria-label="Last sheet"><NavArrow bar /></IconButton>
        </SheetNav>
        <SheetTabs>
          <SheetTab $w={64} $on>Sheet1</SheetTab>
          <SheetTab $w={60}>Sheet2</SheetTab>
          <SheetTab $w={60}>Sheet3</SheetTab>
          <SheetTab $w={34} aria-label="Insert worksheet"><svg width="15" height="14" viewBox="0 0 15 14"><path d="M4.500 3.500h9v7l-2 2h-7z" fill="#f4f8fd" stroke="#5b7aa8" /><path d="M4 0v8M0 4h8M1.200 1.200l5.600 5.600M6.800 1.200 1.200 6.800" stroke="#e49a1c" /><circle cx="4" cy="4" r="1.500" fill="#fff4b8" /></svg></SheetTab>
        </SheetTabs>
        <HScroll>
          <SplitH />
          <ArrowButton aria-label="Scroll left"><Tri dir="l" /></ArrowButton>
          <ThumbH><i /><i /><i /><i /></ThumbH>
          <Spring />
          <ArrowButton aria-label="Scroll right"><Tri dir="r" /></ArrowButton>
          <SplitH />
        </HScroll>
      </SheetBar>

      <StatusBar>
        <StatusText>Ready</StatusText>
        <StatusRight>
          <ViewButtons>
            <ViewButton $on aria-label="Normal view"><svg width="13" height="11" viewBox="0 0 13 11" fill="#fff" stroke="#6b5a3a"><path d="M.5.500h12v10H.5zM.5 3.800h12M.5 7.200h12M4.500.5v10M8.500.5v10" /></svg></ViewButton>
            <ViewButton aria-label="Page layout view"><svg width="13" height="12" viewBox="0 0 13 12" fill="#fff" stroke="#56606e"><path d="M.5.500h12v11H.5z" fill="#98a3b2" /><path d="M3.500 2.500h6v7h-6zM5 4.500h3M5 6.500h3" /></svg></ViewButton>
            <ViewButton aria-label="Page break preview"><svg width="13" height="12" viewBox="0 0 13 12" fill="#fff" stroke="#56606e"><path d="M.5.500h12v11H.5z" fill="#b5bfcc" /><path d="M.5.500h5v7h-5zM7.500.5h5v7h-5z" /></svg></ViewButton>
          </ViewButtons>
          <ZoomLabel>190%</ZoomLabel>
          <IconButton $w={17} aria-label="Zoom out"><svg width="16" height="16" viewBox="0 0 16 16"><circle cx="8" cy="8" r="7" fill="#e2ebf7" stroke="#4d6b9c" /><path d="M4.500 8h7" stroke="#3f5377" strokeWidth="2" /></svg></IconButton>
          <ZoomSlider type="range" aria-label="Zoom" min={0} max={100} defaultValue={62} />
          <IconButton $w={17} aria-label="Zoom in"><svg width="16" height="16" viewBox="0 0 16 16"><circle cx="8" cy="8" r="7" fill="#e2ebf7" stroke="#4d6b9c" /><path d="M4.500 8h7M8 4.500v7" stroke="#3f5377" strokeWidth="2" /></svg></IconButton>
        </StatusRight>
      </StatusBar>

      <Taskbar>
        {Object.entries(appIcons).map(([name, icon], i) => (
          <Task key={name} $w={i === 0 ? 48 : i === 1 ? 50 : 43} aria-label={name}>{icon}</Task>
        ))}
        <Task $open aria-label="Chrome"><Chrome /></Task>
        <Task $on aria-label="Excel"><Excel /></Task>
        <Task $open aria-label="Paint"><Paint /></Task>
        <Tray>
          <TrayItem $w={24} aria-label="Hidden icons"><svg width="12" height="7" viewBox="0 0 12 7"><path d="m.5 6.500 5.500-5.500 5.500 5.500" fill="none" stroke="#fff" strokeWidth="1.200" /></svg></TrayItem>
          <TrayItem $w={24} aria-label="OneDrive"><svg width="17" height="11" viewBox="0 0 17 11"><path d="M4 11a3.500 3.500 0 0 1-.5-6.500A5 5 0 0 1 12.500 4 3.600 3.600 0 0 1 13 11z" fill="#eee" /><path d="M4 11a3.500 3.500 0 0 1 0-6.500L14.500 10z" fill="#d0d0d0" /></svg></TrayItem>
          <TrayItem $w={24} aria-label="Network"><svg width="14" height="14" viewBox="0 0 14 14" fill="none" stroke="#fff"><path d="M1 13A12 12 0 0 1 13 2" opacity=".6" /><path d="M4 13a9 9 0 0 1 9-8M7 13a6 6 0 0 1 6-5" /><circle cx="11.500" cy="12" r="1.500" fill="#fff" stroke="none" /></svg></TrayItem>
          <TrayItem $w={24} aria-label="Volume"><svg width="17" height="14" viewBox="0 0 17 14" fill="none" stroke="#fff"><path d="M1 5h2.500L7 1.500v11L3.500 9H1zM9.500 4.500q2 2.500 0 5M11.800 3q3 4 0 8M14 1.500q4 5.500 0 11" /></svg></TrayItem>
          <TrayItem $w={24} aria-label="Meet now"><svg width="13" height="17" viewBox="0 0 13 17" fill="none" stroke="#fff"><rect x="1.500" y="5" width="7" height="7" rx="1" /><path d="M8.500 8 11.500 6v5L8.500 9M2.500 2.500q3.500-2.500 7 0M2.500 14.500q3.500 2.500 7 0" /></svg></TrayItem>
          <TrayItem $w={34}>ENG</TrayItem>
          <TrayItem $w={74}><span>15:04</span><span>03-06-2023</span></TrayItem>
          <TrayItem $w={36} aria-label="Notifications"><svg width="17" height="17" viewBox="0 0 17 17"><path d="M.5 1.500h16v11h-5l-3 3-3-3h-5z" fill="none" stroke="#fff" strokeWidth="1.200" /></svg></TrayItem>
          <ShowDesktop aria-label="Show desktop" />
        </Tray>
      </Taskbar>
    </Page>
  );
}
